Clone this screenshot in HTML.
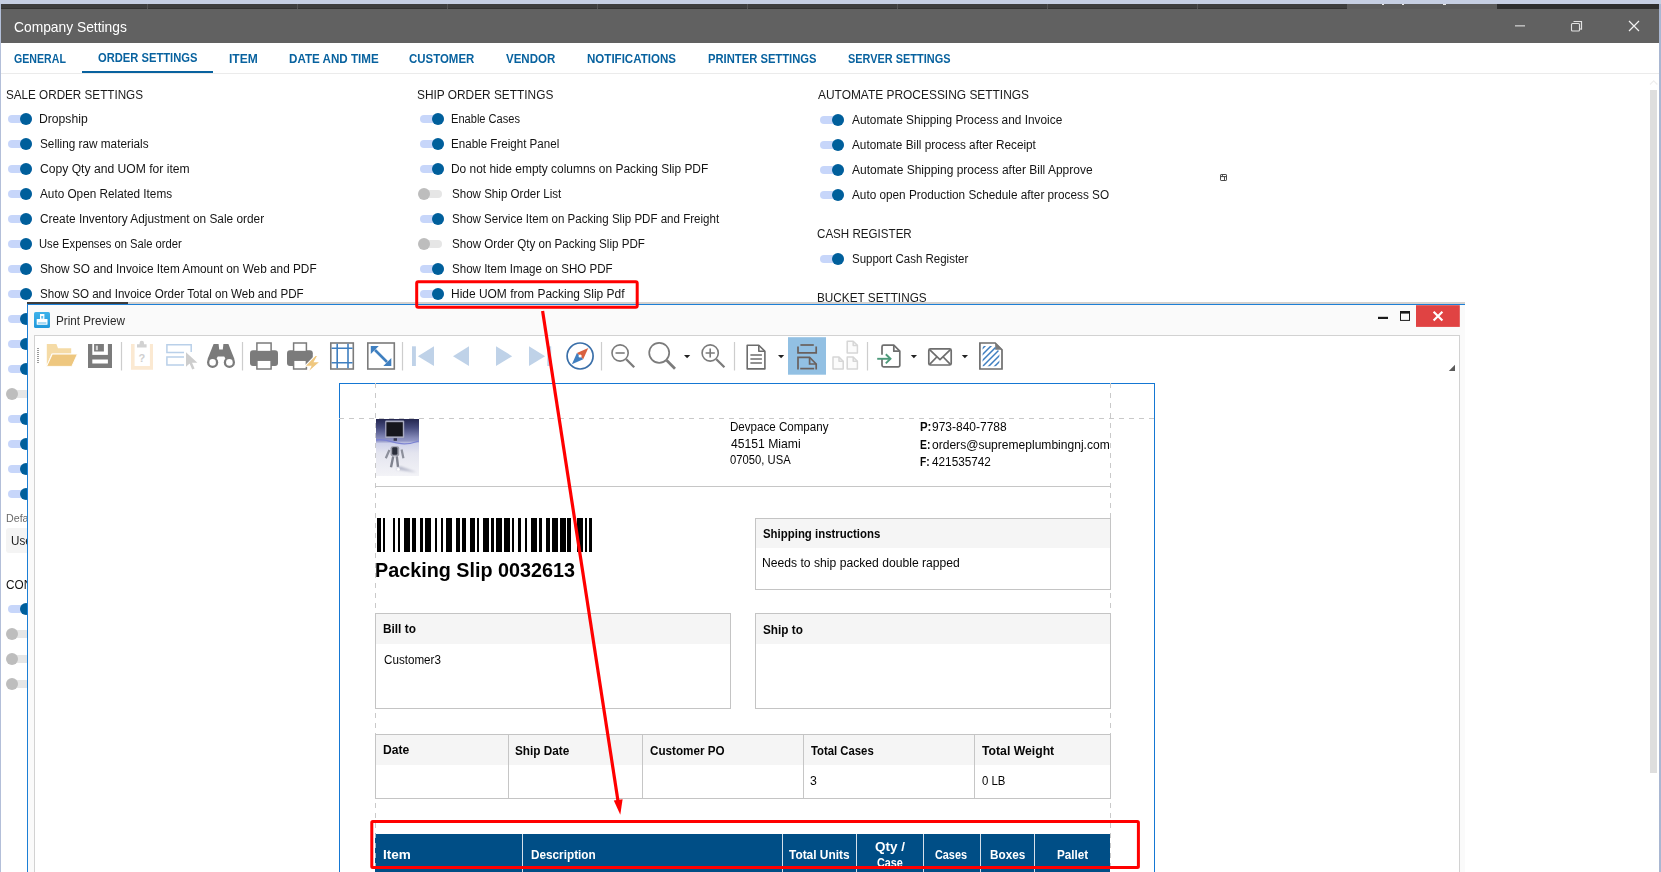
<!DOCTYPE html>
<html lang="en">
<head>
<meta charset="utf-8">
<title>Company Settings</title>
<style>
html,body{margin:0;padding:0}
body{width:1661px;height:872px;position:relative;overflow:hidden;background:#fff;font-family:"Liberation Sans",sans-serif;}
.abs,.t,.tg,.kn,.bx{position:absolute}
.t{white-space:pre;transform-origin:0 0}
.tg{width:24px;height:8px;border-radius:4px;background:#c7d6fa}
.tg.off{background:#e6e6e6;width:22px}
.kn{width:12px;height:12px;border-radius:6px;background:#005f9b}
.kn.off{background:#bdbdbd}
.bx{box-sizing:border-box;border:1px solid #c4c4c4;background:#fff;z-index:7}
.hd{position:absolute;background:#f5f5f5;z-index:7}
</style>
</head>
<body>
<!-- ===== top strip / title bar ===== -->
<div class="abs" style="left:0;top:0;width:1661px;height:4px;background:#c6cfe3"></div>
<div class="abs" style="left:0;top:4px;width:1px;height:868px;background:#b3bfd9"></div>
<div class="abs" style="left:1659px;top:4px;width:2px;height:868px;background:#a9b7d2"></div>
<div class="abs" style="left:1px;top:4px;width:1658px;height:5px;background:#3e3e3e"></div>
<div class="abs" style="left:1347px;top:4px;width:150px;height:5px;background:#5c5c5c"></div>
<div class="abs" style="left:1497px;top:4px;width:162px;height:5px;background:#2e2e2e"></div>
<div class="abs" style="left:1px;top:8px;width:1346px;height:1px;background:#333"></div>
<div class="abs" style="left:1px;top:9px;width:1658px;height:34px;background:#616161"></div>
<svg class="abs" style="left:0;top:0" width="1661" height="44">
 <g stroke="#555" stroke-width="1">
  <path d="M147.5 4v5M297.5 4v5M447.5 4v5M597.5 4v5M747.5 4v5M897.5 4v5M1047.5 4v5M1197.5 4v5"/>
 </g>
 <g fill="#e8e8e8"><rect x="1382" y="4" width="2" height="1"/><rect x="1402" y="4" width="2" height="1"/><rect x="1443" y="4" width="3" height="1"/></g>
 <rect x="1515" y="25" width="10" height="1.6" fill="#b9b9b9"/>
 <g fill="none" stroke="#e2e2e2" stroke-width="1.1">
  <path d="M1573.5 21.5h8v8"/><rect x="1571.5" y="23.5" width="8" height="7.5" rx="1"/>
  <path d="M1581.5 21.5v7.5h-2"/>
 </g>
 <path d="M1629 21l10 10M1639 21l-10 10" stroke="#f2f2f2" stroke-width="1.2" fill="none"/>
</svg>

<!-- ===== tab bar ===== -->
<div class="abs" style="left:1px;top:73px;width:1658px;height:1px;background:#ebebeb"></div>
<div class="abs" style="left:82px;top:70.8px;width:131px;height:2.4px;background:#08629f"></div>

<!-- ===== scrollbar ===== -->
<div class="abs" style="left:1650px;top:90px;width:7px;height:683px;background:#dedede"></div>
<svg class="abs" style="left:1648px;top:78px" width="12" height="8"><path d="M2 6.5l3.7-3.7 3.7 3.7" fill="none" stroke="#eeeeee" stroke-width="1.2"/></svg>

<!-- tiny icon -->
<svg class="abs" style="left:1219px;top:173px" width="10" height="10"><g fill="none" stroke="#4a4a4a" stroke-width="1"><rect x="1.5" y="1.5" width="6" height="6" rx=".6"/><path d="M1.5 3.6h6M5.5 3.6v3.9M3.4 1.5v2.1"/></g></svg>

<!-- "Use" dropdown box (clipped by preview window) -->
<div class="abs" style="left:6px;top:528px;width:120px;height:25px;background:#f4f4f4;border-radius:3px"></div>

<div class="tg" style="left:8px;top:115px;"></div><div class="kn" style="left:20px;top:113px;"></div>
<div class="tg" style="left:8px;top:140px;"></div><div class="kn" style="left:20px;top:138px;"></div>
<div class="tg" style="left:8px;top:165px;"></div><div class="kn" style="left:20px;top:163px;"></div>
<div class="tg" style="left:8px;top:190px;"></div><div class="kn" style="left:20px;top:188px;"></div>
<div class="tg" style="left:8px;top:215px;"></div><div class="kn" style="left:20px;top:213px;"></div>
<div class="tg" style="left:8px;top:240px;"></div><div class="kn" style="left:20px;top:238px;"></div>
<div class="tg" style="left:8px;top:265px;"></div><div class="kn" style="left:20px;top:263px;"></div>
<div class="tg" style="left:8px;top:290px;"></div><div class="kn" style="left:20px;top:288px;"></div>
<div class="tg" style="left:8px;top:315px;"></div><div class="kn" style="left:20px;top:313px;"></div>
<div class="tg" style="left:8px;top:340px;"></div><div class="kn" style="left:20px;top:338px;"></div>
<div class="tg" style="left:8px;top:365px;"></div><div class="kn" style="left:20px;top:363px;"></div>
<div class="tg off" style="left:8px;top:390px;"></div><div class="kn off" style="left:6px;top:388px;"></div>
<div class="tg" style="left:8px;top:415px;"></div><div class="kn" style="left:20px;top:413px;"></div>
<div class="tg" style="left:8px;top:440px;"></div><div class="kn" style="left:20px;top:438px;"></div>
<div class="tg" style="left:8px;top:465px;"></div><div class="kn" style="left:20px;top:463px;"></div>
<div class="tg" style="left:8px;top:490px;"></div><div class="kn" style="left:20px;top:488px;"></div>
<div class="tg" style="left:8px;top:605px;"></div><div class="kn" style="left:20px;top:603px;"></div>
<div class="tg off" style="left:8px;top:630px;"></div><div class="kn off" style="left:6px;top:628px;"></div>
<div class="tg off" style="left:8px;top:655px;"></div><div class="kn off" style="left:6px;top:653px;"></div>
<div class="tg off" style="left:8px;top:680px;"></div><div class="kn off" style="left:6px;top:678px;"></div>
<div class="tg" style="left:420px;top:115px;"></div><div class="kn" style="left:432px;top:113px;"></div>
<div class="tg" style="left:420px;top:140px;"></div><div class="kn" style="left:432px;top:138px;"></div>
<div class="tg" style="left:420px;top:165px;"></div><div class="kn" style="left:432px;top:163px;"></div>
<div class="tg off" style="left:420px;top:190px;"></div><div class="kn off" style="left:418px;top:188px;"></div>
<div class="tg" style="left:420px;top:215px;"></div><div class="kn" style="left:432px;top:213px;"></div>
<div class="tg off" style="left:420px;top:240px;"></div><div class="kn off" style="left:418px;top:238px;"></div>
<div class="tg" style="left:420px;top:265px;"></div><div class="kn" style="left:432px;top:263px;"></div>
<div class="tg" style="left:420px;top:290px;"></div><div class="kn" style="left:432px;top:288px;"></div>
<div class="tg" style="left:820px;top:116px;"></div><div class="kn" style="left:832px;top:114px;"></div>
<div class="tg" style="left:820px;top:141px;"></div><div class="kn" style="left:832px;top:139px;"></div>
<div class="tg" style="left:820px;top:166px;"></div><div class="kn" style="left:832px;top:164px;"></div>
<div class="tg" style="left:820px;top:191px;"></div><div class="kn" style="left:832px;top:189px;"></div>
<div class="tg" style="left:820px;top:255px;"></div><div class="kn" style="left:832px;top:253px;"></div>

<!-- ===== Print Preview window ===== -->
<div class="abs" style="left:27px;top:302.4px;width:1438px;height:570px;background:#fafafa;z-index:5"></div>
<div class="abs" style="left:27px;top:302.4px;width:1438px;height:1.6px;background:#d3d1cf;z-index:5"></div>
<div class="abs" style="left:27px;top:302.4px;width:101px;height:1.6px;background:#3c3c3c;z-index:5"></div>
<div class="abs" style="left:27px;top:304px;width:1438px;height:1.2px;background:#1c7fd6;z-index:5"></div>
<div class="abs" style="left:27px;top:304px;width:1.3px;height:568px;background:#1c7fd6;z-index:5"></div>
<!-- inner panel -->
<div class="abs" style="left:34px;top:335px;width:1426px;height:540px;box-sizing:border-box;border:1px solid #d2d2d2;background:#fff;z-index:6"></div>
<!-- window icon + controls -->
<svg class="abs" style="left:0;top:300px;z-index:6" width="1470" height="40">
 <defs><linearGradient id="ig" x1="0" y1="0" x2="0" y2="1"><stop offset="0" stop-color="#3fb2ea"/><stop offset="1" stop-color="#1f98db"/></linearGradient></defs>
 <rect x="34" y="12" width="16" height="16" rx="1.6" fill="url(#ig)"/>
 <g fill="#fff"><rect x="40" y="14" width="4.4" height="6"/><rect x="36.7" y="19" width="10.8" height="5.7" rx=".5"/></g>
 <rect x="41.2" y="16" width="2" height="2.6" fill="#62bdec"/>
 <rect x="37.8" y="22.6" width="8.6" height=".8" fill="#2ba2e2"/>
 <rect x="1378" y="16.8" width="10" height="2.2" fill="#1a1a1a"/>
 <rect x="1400.5" y="12" width="9" height="8.4" fill="none" stroke="#1a1a1a" stroke-width="1"/>
 <rect x="1400" y="11" width="10" height="2.6" fill="#1a1a1a"/>
 <rect x="1416" y="5.2" width="43.8" height="21.7" fill="#e04343"/>
 <path d="M1433.6 11.7l8.8 8.8M1442.4 11.7l-8.8 8.8" stroke="#fff" stroke-width="2.2" fill="none"/>
</svg>

<svg class="abs" style="left:0;top:0;z-index:7" width="1661" height="872">
 <!-- grip -->
 <path d="M38 348v15.5" stroke="#9a9a9a" stroke-width="2" stroke-dasharray="1 1" fill="none"/>
 <!-- separators -->
 <path d="M121.5 342v28.6M242.5 342v28.6M402.5 342v28.6M601.5 342v28.6M734.5 342v28.6M867.5 342v28.6" stroke="#cdcdcd" stroke-width="1.2" fill="none"/>
 <!-- open folder -->
 <path d="M46.8 344h9.6l1.6 4.2h13.2v5.4H51.6L46.8 365z" fill="#f5dba6"/>
 <path d="M52.3 354.1H77.4L71.8 366.4H46.6z" fill="#eec77f" stroke="#fff" stroke-width=".9"/>
 <!-- save -->
 <g>
  <rect x="88" y="344" width="24" height="24" fill="#7b7b7b"/>
  <rect x="92.3" y="344" width="15.6" height="10.9" fill="#fff"/>
  <rect x="94.1" y="344" width="9.8" height="7.5" fill="#7b7b7b"/>
  <rect x="95.8" y="345.6" width="2.1" height="4.6" fill="#d6d6d6"/>
  <rect x="92.3" y="359.5" width="15.6" height="4" fill="#fff"/>
 </g>
 <!-- clipboard (disabled) -->
 <g>
  <path d="M131 344h3.6v22h15.3v-22h3.1v25.7h-22z" fill="#fbe9d2"/>
  <path d="M137 347.6v-3.4h2.6v-1.2a2.1 2.1 0 0 1 4.4 0v1.2h2.6v3.4z" fill="#d2d2d2"/>
  <text x="138.6" y="362" font-family="Liberation Sans, sans-serif" font-size="11" font-weight="700" fill="#cfcfcf">?</text>
 </g>
 <!-- select (disabled) -->
 <g fill="none" stroke="#b9d0e9" stroke-width="1.5">
  <path d="M191.2 352V344.8H166.9V352.6H184"/>
  <path d="M184 357H166.9V365H184"/>
 </g>
 <path d="M186 352.2V366.8L189.6 363.6L192.2 369.6L194.6 368.5L192 362.7H197.4z" fill="#cdcdcd"/>
 <!-- binoculars -->
 <g fill="#7b7b7b">
  <path d="M213.6 344h5l.6 5.6h3.6l.6-5.6h5l6.2 15.5-7 2.5-3.4-5.6h-6.4l-3.4 5.6-7-2.5z"/>
  <circle cx="212.6" cy="362.4" r="5.6"/><circle cx="229.4" cy="362.4" r="5.6"/>
 </g>
 <circle cx="212.6" cy="362.4" r="3.3" fill="#fff"/><circle cx="229.4" cy="362.4" r="3.3" fill="#fff"/>
 <!-- printer -->
 <g>
  <rect x="250" y="350.2" width="28" height="15.8" rx="3" fill="#7b7b7b"/>
  <rect x="256.9" y="343" width="14.2" height="8.6" fill="#fff" stroke="#7b7b7b" stroke-width="1.5"/>
  <rect x="256.9" y="360.2" width="14.2" height="8.8" fill="#fff" stroke="#7b7b7b" stroke-width="1.5"/>
 </g>
 <!-- quick print -->
 <g>
  <rect x="287" y="350.2" width="25.8" height="15.8" rx="3" fill="#7b7b7b"/>
  <rect x="293.6" y="343" width="12.8" height="8.6" fill="#fff" stroke="#7b7b7b" stroke-width="1.5"/>
  <rect x="293.6" y="360.2" width="12.8" height="8.8" fill="#fff" stroke="#7b7b7b" stroke-width="1.5"/>
  <path d="M315.4 355.4L304.8 366.2H310.8L307.8 372.6L320.4 361.6H314.4L318 355.4z" fill="#efc77e" stroke="#fff" stroke-width="1.1"/>
 </g>
 <!-- page margins grid -->
 <rect x="330.8" y="343" width="22.5" height="26" fill="#fff" stroke="#7b7b7b" stroke-width="1.6"/>
 <path d="M337.2 343.8V368.2M348 343.8V368.2M331.6 348.3H352.5M331.6 362.8H352.5" stroke="#3f7fc0" stroke-width="1.6" fill="none"/>
 <!-- scale -->
 <rect x="367.8" y="343" width="26.5" height="26" fill="#fff" stroke="#7b7b7b" stroke-width="1.6"/>
 <path d="M375 350L387 362" stroke="#3f7fc0" stroke-width="2.6" fill="none"/>
 <path d="M370.8 345.9H378.8L370.8 353.9zM391.3 366.1H383.3L391.3 358.1z" fill="#3f7fc0"/>
 <!-- nav arrows (disabled) -->
 <g fill="#bfd2e8">
  <rect x="412" y="346.3" width="3.9" height="19.7"/>
  <path d="M434 346.3V366L417.9 356.2z"/>
  <path d="M469 346.3V366L453 356.2z"/>
  <path d="M496 346.3V366L512.2 356.2z"/>
  <path d="M529 346.3V366L545.1 356.2z"/>
  <rect x="547.3" y="346.3" width="3.9" height="19.7"/>
 </g>
 <!-- compass -->
 <circle cx="580.1" cy="356" r="13" fill="#fff" stroke="#3a6fa9" stroke-width="1.7"/>
 <path d="M588.3 348L576.9 352.9L583.2 359.2z" fill="#d9613f"/>
 <path d="M571.9 364.3L576.9 352.9L583.2 359.2z" fill="#3f7fc0"/>
 <circle cx="580.1" cy="356" r="1.6" fill="#fff"/>
 <!-- zoom out -->
 <g fill="none" stroke="#7b7b7b">
  <circle cx="620.1" cy="353" r="8.1" stroke-width="1.6"/>
  <path d="M626.2 359.2L634.2 367.2" stroke-width="2.3"/>
  <path d="M615.5 353H624.7" stroke-width="1.6"/>
  <!-- zoom -->
  <circle cx="659.2" cy="352.8" r="10" stroke-width="1.7"/>
  <path d="M666.6 360.2L675 368.8" stroke-width="2.7"/>
  <!-- zoom in -->
  <circle cx="710.2" cy="353" r="8.1" stroke-width="1.6"/>
  <path d="M716.3 359.2L724.4 367.2" stroke-width="2.3"/>
  <path d="M705.6 353H714.8M710.2 348.4V357.6" stroke-width="1.6"/>
 </g>
 <!-- dropdown carets -->
 <g fill="#222">
  <path d="M684 355.1h6.2l-3.1 3.2z"/><path d="M778 355.1h6.2l-3.1 3.2z"/>
  <path d="M910.8 355.1h6.2l-3.1 3.2z"/><path d="M961.8 355.1h6.2l-3.1 3.2z"/>
 </g>
 <!-- page -->
 <g fill="none" stroke="#6c6c6c" stroke-width="1.6" stroke-linejoin="round">
  <path d="M747.2 345.2h11.6l6.1 6.1v17.6h-17.7z" fill="#fff"/>
  <path d="M758.8 345.2v6.1h6.1"/>
  <path d="M750.4 355H761.9M750.4 359.1H761.9M750.4 363.1H761.9" stroke-width="1.5"/>
 </g>
 <!-- continuous scroll (active) -->
 <rect x="788" y="337.2" width="38" height="37.5" fill="#92c0e3"/>
 <g fill="none" stroke="#6a605d" stroke-width="1.7">
  <path d="M800.4 345H813.8"/>
  <path d="M798 346.4V352.9H816.2V346.4"/>
  <path d="M798 369.4V357.4H809.6L816.2 364V369.4"/>
  <path d="M809.6 357.4V364H816.2"/>
  <path d="M800.2 368.6H814.2"/>
 </g>
 <!-- multiple pages (disabled) -->
 <g fill="#fbfbfb" stroke="#d6d6d6" stroke-width="1.5" stroke-linejoin="round">
  <path d="M847.2 341.2h6l4.2 4.2v7.6h-10.2z"/><path d="M853.2 341.2v4.2h4.2" fill="none"/>
  <path d="M833 357.1h6l4.2 4.2v7.6h-10.2z"/><path d="M839 357.1v4.2h4.2" fill="none"/>
  <path d="M847.2 357.1h6l4.2 4.2v7.6h-10.2z"/><path d="M853.2 357.1v4.2h4.2" fill="none"/>
 </g>
 <!-- export -->
 <g fill="none" stroke="#6e6e6e" stroke-width="1.7" stroke-linejoin="round">
  <path d="M882 358v7.2a1.6 1.6 0 0 0 1.6 1.6h14.6a1.6 1.6 0 0 0 1.6-1.6v-14l-6-6h-10.2a1.6 1.6 0 0 0 -1.6 1.6v8" fill="#fff"/>
  <path d="M893.8 345.2v6h6"/>
 </g>
 <g fill="none" stroke="#4d9a7b" stroke-width="1.9"><path d="M877.2 358.8H890.4"/><path d="M885.8 354.2L890.5 358.8L885.8 363.4"/></g>
 <!-- mail -->
 <g fill="none" stroke="#6e6e6e" stroke-width="1.7" stroke-linejoin="round">
  <rect x="928.8" y="348.8" width="22.4" height="16.2" rx="1.6" fill="#fff"/>
  <path d="M929.6 349.6L940 359.6L950.4 349.6"/>
  <path d="M929.6 364.3L936.8 357M950.4 364.3L943.2 357"/>
 </g>
 <!-- watermark -->
 <clipPath id="wmc"><path d="M982.6 346h11.4l5.4 5.4v14.8h-16.8z"/></clipPath>
 <path d="M979.9 343h15.3l6.8 6.8v19.2h-22.1z" fill="#fff" stroke="#6e6e6e" stroke-width="1.7" stroke-linejoin="miter"/>
 <path d="M995.2 343v6.8h6.8z" fill="#7b7b7b"/>
 <g clip-path="url(#wmc)" stroke="#3f7fc0" stroke-width="1.5" fill="none">
  <path d="M975 356L990 341M975 362L996 341M975 368L1002 341M978 371L1005 344M984 371L1005 350M990 371L1005 356M996 371L1005 362"/>
 </g>
 <!-- corner -->
 <path d="M1455 364.8V371H1448.8z" fill="#5a5a5a"/>
</svg>


<!-- ===== document page ===== -->
<div class="abs" style="left:339px;top:383px;width:816px;height:500px;box-sizing:border-box;border:1px solid #1577d3;background:#fff;z-index:7"></div>
<svg class="abs" style="left:0;top:0;z-index:7" width="1661" height="872">
 <g stroke="#c9c9c9" stroke-width="1" stroke-dasharray="5 5" fill="none">
  <path d="M375.5 383V872M1110.5 383V872"/>
  <path d="M339 418.5H1154"/>
 </g>
 <path d="M375 486.5H1111" stroke="#c6c6c6" stroke-width="1"/>
</svg>

<!-- boxes -->
<div class="bx" style="left:755px;top:518px;width:356px;height:72px"></div><div class="hd" style="left:756px;top:519px;width:354px;height:29px"></div>
<div class="bx" style="left:375px;top:613px;width:356px;height:96px"></div><div class="hd" style="left:376px;top:614px;width:354px;height:30px"></div>
<div class="bx" style="left:755px;top:613px;width:356px;height:96px"></div><div class="hd" style="left:756px;top:614px;width:354px;height:30px"></div>
<div class="bx" style="left:375px;top:734px;width:736px;height:65px"></div><div class="hd" style="left:376px;top:735px;width:734px;height:30px"></div>
<svg class="abs" style="left:0;top:0;z-index:7" width="1661" height="872">
 <path d="M508.5 735V798M642.5 735V798M803.5 735V798M974.5 735V798" stroke="#c6c6c6" stroke-width="1" fill="none"/>
 <rect x="375" y="834" width="735" height="40" fill="#004e86"/>
 <path d="M522.5 834V872M782.5 834V872M856.5 834V872M923.5 834V872M980.5 834V872M1034.5 834V872" stroke="#d5e0ea" stroke-width="1" fill="none"/>
 <g stroke="#c9c9c9" stroke-width="1" stroke-dasharray="5 5" fill="none"><path d="M375.5 833V872" stroke="#9fb3c6"/></g>
</svg>

<svg class="abs" style="left:376px;top:419px;z-index:8" width="43" height="57" viewBox="0 0 43 57">
 <defs>
  <linearGradient id="rb1" x1="0" y1="0" x2="0" y2="1">
   <stop offset="0" stop-color="#23264f"/><stop offset=".15" stop-color="#454a7c"/><stop offset=".33" stop-color="#8489b8"/>
   <stop offset=".385" stop-color="#9297c8"/><stop offset=".43" stop-color="#cfd2ea"/><stop offset=".6" stop-color="#e4e5ef"/><stop offset="1" stop-color="#f3f3f7"/>
  </linearGradient>
  <filter id="rbb" x="-20%" y="-20%" width="140%" height="140%"><feGaussianBlur stdDeviation=".55"/></filter>
  <filter id="rbc" x="-20%" y="-20%" width="140%" height="140%"><feGaussianBlur stdDeviation=".9"/></filter>
 </defs>
 <rect width="43" height="57" fill="url(#rb1)"/>
 <g filter="url(#rbc)">
  <path d="M20 50.5L40.5 53.2L24 47.2z" fill="#b5b8ca"/>
 </g>
 <g filter="url(#rbb)">
  <path d="M0 21C8 19.4 14 22.6 22 24.2S36 24.6 43 22" fill="none" stroke="#7b82d2" stroke-width="1.3"/>
  <rect x="9.2" y="1.6" width="19" height="17.4" rx="1" fill="#a9abc0"/>
  <rect x="10.4" y="3.2" width="16.4" height="14.2" fill="#14141e"/>
  <rect x="17.6" y="19.2" width="3.4" height="2.6" fill="#34364c"/>
  <rect x="14.6" y="27.2" width="8.6" height="10" rx="2" fill="#9a9ca8"/><rect x="16.2" y="28.2" width="5.2" height="7.6" rx="1.4" fill="#2c2f3b"/>
  <path d="M13.4 31l-3.6 8.2M25.6 30.6l1.8 8.6" stroke="#8d909c" stroke-width="2.2" fill="none"/>
  <path d="M17.2 37.4l-2.2 10.8M20.8 37.4l1.2 10.4" stroke="#80838f" stroke-width="2.4" fill="none"/>
  <circle cx="22.4" cy="50.4" r="1.4" fill="#fff"/>
 </g>
</svg>

<svg class="abs" style="left:370px;top:517.9px;z-index:8" width="230" height="34" shape-rendering="crispEdges"><rect x="6.92" y="0" width="4.15" height="33.8"/><rect x="12.88" y="0" width="2.08" height="33.8"/><rect x="22.85" y="0" width="2.08" height="33.8"/><rect x="27.83" y="0" width="2.08" height="33.8"/><rect x="33.92" y="0" width="5.95" height="33.8"/><rect x="41.96" y="0" width="4.02" height="33.8"/><rect x="49.99" y="0" width="2.91" height="33.8"/><rect x="54.97" y="0" width="5.95" height="33.8"/><rect x="64.94" y="0" width="2.08" height="33.8"/><rect x="70.89" y="0" width="2.08" height="33.8"/><rect x="75.88" y="0" width="6.09" height="33.8"/><rect x="85.99" y="0" width="4.02" height="33.8"/><rect x="91.94" y="0" width="3.88" height="33.8"/><rect x="100.11" y="0" width="4.85" height="33.8"/><rect x="106.90" y="0" width="2.08" height="33.8"/><rect x="112.99" y="0" width="6.09" height="33.8"/><rect x="120.88" y="0" width="3.05" height="33.8"/><rect x="126.00" y="0" width="5.95" height="33.8"/><rect x="134.03" y="0" width="5.82" height="33.8"/><rect x="141.93" y="0" width="2.08" height="33.8"/><rect x="148.02" y="0" width="2.91" height="33.8"/><rect x="154.94" y="0" width="1.94" height="33.8"/><rect x="161.04" y="0" width="5.95" height="33.8"/><rect x="168.93" y="0" width="3.05" height="33.8"/><rect x="175.85" y="0" width="4.15" height="33.8"/><rect x="181.81" y="0" width="6.09" height="33.8"/><rect x="189.84" y="0" width="6.09" height="33.8"/><rect x="196.90" y="0" width="4.15" height="33.8"/><rect x="206.87" y="0" width="6.09" height="33.8"/><rect x="214.90" y="0" width="2.08" height="33.8"/><rect x="218.91" y="0" width="3.05" height="33.8"/></svg>

<span class="t" style="left:13.79px;top:20px;font-size:14.5px;line-height:14.5px;color:#ffffff;transform:scaleX(0.9527);">Company Settings</span>
<span class="t" style="left:14.09px;top:52px;font-size:13px;line-height:13px;font-weight:700;color:#08629f;transform:scaleX(0.8159);">GENERAL</span>
<span class="t" style="left:97.87px;top:51px;font-size:13px;line-height:13px;font-weight:700;color:#08629f;transform:scaleX(0.8603);">ORDER SETTINGS</span>
<span class="t" style="left:228.81px;top:52px;font-size:13px;line-height:13px;font-weight:700;color:#08629f;transform:scaleX(0.9254);">ITEM</span>
<span class="t" style="left:288.83px;top:52px;font-size:13px;line-height:13px;font-weight:700;color:#08629f;transform:scaleX(0.8939);">DATE AND TIME</span>
<span class="t" style="left:409.36px;top:52px;font-size:13px;line-height:13px;font-weight:700;color:#08629f;transform:scaleX(0.8805);">CUSTOMER</span>
<span class="t" style="left:506.08px;top:52px;font-size:13px;line-height:13px;font-weight:700;color:#08629f;transform:scaleX(0.8855);">VENDOR</span>
<span class="t" style="left:586.83px;top:52px;font-size:13px;line-height:13px;font-weight:700;color:#08629f;transform:scaleX(0.8889);">NOTIFICATIONS</span>
<span class="t" style="left:707.65px;top:52px;font-size:13px;line-height:13px;font-weight:700;color:#08629f;transform:scaleX(0.8635);">PRINTER SETTINGS</span>
<span class="t" style="left:847.58px;top:52px;font-size:13px;line-height:13px;font-weight:700;color:#08629f;transform:scaleX(0.8406);">SERVER SETTINGS</span>
<span class="t" style="left:5.52px;top:89px;font-size:12.8px;line-height:12.8px;color:#1a1a1a;transform:scaleX(0.9129);">SALE ORDER SETTINGS</span>
<span class="t" style="left:417.30px;top:89px;font-size:12.8px;line-height:12.8px;color:#1a1a1a;transform:scaleX(0.9276);">SHIP ORDER SETTINGS</span>
<span class="t" style="left:818.00px;top:89px;font-size:12.8px;line-height:12.8px;color:#1a1a1a;transform:scaleX(0.9324);">AUTOMATE PROCESSING SETTINGS</span>
<span class="t" style="left:817.32px;top:228px;font-size:12.8px;line-height:12.8px;color:#1a1a1a;transform:scaleX(0.9065);">CASH REGISTER</span>
<span class="t" style="left:817.08px;top:292px;font-size:12.8px;line-height:12.8px;color:#1a1a1a;transform:scaleX(0.9197);">BUCKET SETTINGS</span>
<span class="t" style="left:39.39px;top:113px;font-size:12px;line-height:12px;color:#141414;transform:scaleX(1.0129);">Dropship</span>
<span class="t" style="left:39.91px;top:138px;font-size:12px;line-height:12px;color:#141414;transform:scaleX(0.9804);">Selling raw materials</span>
<span class="t" style="left:39.89px;top:163px;font-size:12px;line-height:12px;color:#141414;transform:scaleX(1.0106);">Copy Qty and UOM for item</span>
<span class="t" style="left:40.40px;top:188px;font-size:12px;line-height:12px;color:#141414;transform:scaleX(0.9803);">Auto Open Related Items</span>
<span class="t" style="left:39.91px;top:213px;font-size:12px;line-height:12px;color:#141414;transform:scaleX(0.9883);">Create Inventory Adjustment on Sale order</span>
<span class="t" style="left:39.47px;top:238px;font-size:12px;line-height:12px;color:#141414;transform:scaleX(0.9347);">Use Expenses on Sale order</span>
<span class="t" style="left:39.91px;top:263px;font-size:12px;line-height:12px;color:#141414;transform:scaleX(0.9834);">Show SO and Invoice Item Amount on Web and PDF</span>
<span class="t" style="left:39.92px;top:288px;font-size:12px;line-height:12px;color:#141414;transform:scaleX(0.9654);">Show SO and Invoice Order Total on Web and PDF</span>
<span class="t" style="left:451.38px;top:113px;font-size:12px;line-height:12px;color:#141414;transform:scaleX(0.9242);">Enable Cases</span>
<span class="t" style="left:451.33px;top:138px;font-size:12px;line-height:12px;color:#141414;transform:scaleX(0.9660);">Enable Freight Panel</span>
<span class="t" style="left:451.31px;top:163px;font-size:12px;line-height:12px;color:#141414;transform:scaleX(0.9940);">Do not hide empty columns on Packing Slip PDF</span>
<span class="t" style="left:451.82px;top:188px;font-size:12px;line-height:12px;color:#141414;transform:scaleX(0.9641);">Show Ship Order List</span>
<span class="t" style="left:451.82px;top:213px;font-size:12px;line-height:12px;color:#141414;transform:scaleX(0.9628);">Show Service Item on Packing Slip PDF and Freight</span>
<span class="t" style="left:451.82px;top:238px;font-size:12px;line-height:12px;color:#141414;transform:scaleX(0.9673);">Show Order Qty on Packing Slip PDF</span>
<span class="t" style="left:451.82px;top:263px;font-size:12px;line-height:12px;color:#141414;transform:scaleX(0.9635);">Show Item Image on SHO PDF</span>
<span class="t" style="left:451.30px;top:288px;font-size:12px;line-height:12px;color:#141414;transform:scaleX(0.9968);">Hide UOM from Packing Slip Pdf</span>
<span class="t" style="left:852.30px;top:114px;font-size:12px;line-height:12px;color:#141414;transform:scaleX(0.9880);">Automate Shipping Process and Invoice</span>
<span class="t" style="left:852.30px;top:139px;font-size:12px;line-height:12px;color:#141414;transform:scaleX(0.9810);">Automate Bill process after Receipt</span>
<span class="t" style="left:852.30px;top:164px;font-size:12px;line-height:12px;color:#141414;transform:scaleX(0.9990);">Automate Shipping process after Bill Approve</span>
<span class="t" style="left:852.30px;top:189px;font-size:12px;line-height:12px;color:#141414;transform:scaleX(0.9805);">Auto open Production Schedule after process SO</span>
<span class="t" style="left:851.82px;top:253px;font-size:12px;line-height:12px;color:#141414;transform:scaleX(0.9582);">Support Cash Register</span>
<span class="t" style="left:5.53px;top:513px;font-size:11px;line-height:11px;color:#6a6a6a;transform:scaleX(0.9700);">Default</span>
<span class="t" style="left:11.03px;top:535px;font-size:12px;line-height:12px;color:#222;transform:scaleX(0.9700);">Use</span>
<span class="t" style="left:5.51px;top:579px;font-size:12.8px;line-height:12.8px;color:#111;transform:scaleX(0.9200);">CONFIG</span>
<span class="t" style="left:55.63px;top:315px;font-size:12px;line-height:12px;color:#2b2b2b;transform:scaleX(0.9749);z-index:6;">Print Preview</span>
<span class="t" style="left:729.64px;top:421px;font-size:12px;line-height:12px;color:#060606;transform:scaleX(0.9644);z-index:8;">Devpace Company</span>
<span class="t" style="left:730.55px;top:438px;font-size:12px;line-height:12px;color:#060606;transform:scaleX(1.0140);z-index:8;">45151 Miami</span>
<span class="t" style="left:730.33px;top:454px;font-size:12px;line-height:12px;color:#060606;transform:scaleX(0.9370);z-index:8;">07050, USA</span>
<span class="t" style="left:919.79px;top:421px;font-size:12px;line-height:12px;font-weight:700;color:#060606;transform:scaleX(0.9500);z-index:8;">P:</span>
<span class="t" style="left:932.00px;top:421px;font-size:12px;line-height:12px;color:#060606;transform:scaleX(0.9993);z-index:8;">973-840-7788</span>
<span class="t" style="left:919.86px;top:439px;font-size:12px;line-height:12px;font-weight:700;color:#060606;transform:scaleX(0.8600);z-index:8;">E:</span>
<span class="t" style="left:931.70px;top:439px;font-size:12px;line-height:12px;color:#060606;transform:scaleX(1.0043);z-index:8;">orders@supremeplumbingnj.com</span>
<span class="t" style="left:919.66px;top:456px;font-size:12px;line-height:12px;font-weight:700;color:#060606;transform:scaleX(0.8526);z-index:8;">F:</span>
<span class="t" style="left:931.75px;top:456px;font-size:12px;line-height:12px;color:#060606;transform:scaleX(0.9806);z-index:8;">421535742</span>
<span class="t" style="left:374.93px;top:561px;font-size:19.5px;line-height:19.5px;font-weight:700;color:#000;transform:scaleX(1.0136);z-index:8;">Packing Slip 0032613</span>
<span class="t" style="left:762.52px;top:528px;font-size:12px;line-height:12px;font-weight:700;color:#060606;transform:scaleX(0.9513);z-index:8;">Shipping instructions</span>
<span class="t" style="left:762.19px;top:557px;font-size:12px;line-height:12px;color:#060606;transform:scaleX(1.0121);z-index:8;">Needs to ship packed double rapped</span>
<span class="t" style="left:383.26px;top:623px;font-size:12px;line-height:12px;font-weight:700;color:#060606;transform:scaleX(0.9860);z-index:8;">Bill to</span>
<span class="t" style="left:383.52px;top:654px;font-size:12px;line-height:12px;color:#060606;transform:scaleX(0.9697);z-index:8;">Customer3</span>
<span class="t" style="left:762.51px;top:624px;font-size:12px;line-height:12px;font-weight:700;color:#060606;transform:scaleX(0.9811);z-index:8;">Ship to</span>
<span class="t" style="left:383.24px;top:744px;font-size:12px;line-height:12px;font-weight:700;color:#060606;transform:scaleX(1.0101);z-index:8;">Date</span>
<span class="t" style="left:515.31px;top:745px;font-size:12px;line-height:12px;font-weight:700;color:#060606;transform:scaleX(0.9817);z-index:8;">Ship Date</span>
<span class="t" style="left:649.51px;top:745px;font-size:12px;line-height:12px;font-weight:700;color:#060606;transform:scaleX(0.9743);z-index:8;">Customer PO</span>
<span class="t" style="left:811.06px;top:745px;font-size:12px;line-height:12px;font-weight:700;color:#060606;transform:scaleX(0.9430);z-index:8;">Total Cases</span>
<span class="t" style="left:981.75px;top:745px;font-size:12px;line-height:12px;font-weight:700;color:#060606;transform:scaleX(1.0184);z-index:8;">Total Weight</span>
<span class="t" style="left:810.49px;top:775px;font-size:12px;line-height:12px;color:#060606;transform:scaleX(1.0261);z-index:8;">3</span>
<span class="t" style="left:981.53px;top:775px;font-size:12px;line-height:12px;color:#060606;transform:scaleX(0.9489);z-index:8;">0 LB</span>
<span class="t" style="left:382.95px;top:849px;font-size:12px;line-height:12px;font-weight:700;color:#ffffff;transform:scaleX(1.1269);z-index:8;">Item</span>
<span class="t" style="left:531.07px;top:849px;font-size:12px;line-height:12px;font-weight:700;color:#ffffff;transform:scaleX(0.9798);z-index:8;">Description</span>
<span class="t" style="left:789.25px;top:849px;font-size:12px;line-height:12px;font-weight:700;color:#ffffff;transform:scaleX(0.9917);z-index:8;">Total Units</span>
<span class="t" style="left:875.24px;top:841px;font-size:12px;line-height:12px;font-weight:700;color:#ffffff;transform:scaleX(1.1231);z-index:8;">Qty /</span>
<span class="t" style="left:876.55px;top:857px;font-size:12px;line-height:12px;font-weight:700;color:#ffffff;transform:scaleX(0.9009);z-index:8;">Case</span>
<span class="t" style="left:935.35px;top:849px;font-size:12px;line-height:12px;font-weight:700;color:#ffffff;transform:scaleX(0.9043);z-index:8;">Cases</span>
<span class="t" style="left:989.77px;top:849px;font-size:12px;line-height:12px;font-weight:700;color:#ffffff;transform:scaleX(0.9784);z-index:8;">Boxes</span>
<span class="t" style="left:1056.77px;top:849px;font-size:12px;line-height:12px;font-weight:700;color:#ffffff;transform:scaleX(0.9760);z-index:8;">Pallet</span>

<!-- ===== red annotations ===== -->
<svg class="abs" style="left:0;top:0;z-index:20" width="1661" height="872">
 <g fill="none" stroke="#ff0000">
  <rect x="416.7" y="281.7" width="220.5" height="25.6" rx="1.5" stroke-width="3"/>
  <path d="M542.6 311L618 801" stroke-width="3.2"/>
  <rect x="371.8" y="821.5" width="766.6" height="45.9" rx="1" stroke-width="3"/>
 </g>
 <path d="M613.8 800.6L622.6 799.3L620.3 814.8z" fill="#ff0000"/>
</svg>
</body>
</html>
